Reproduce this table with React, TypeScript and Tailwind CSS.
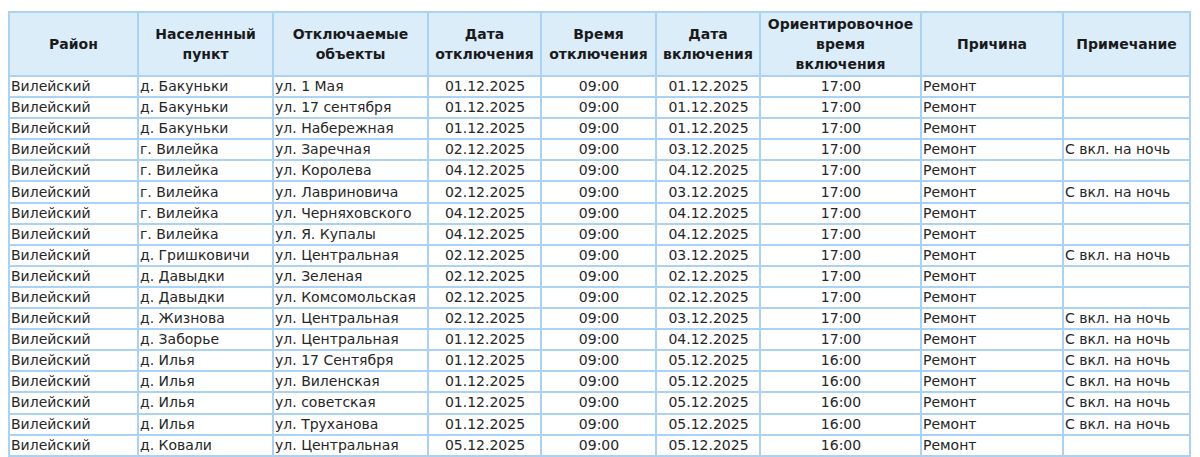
import React from "react";

type Row = [string, string, string, string, string, string, string, string];

const rows: Row[] = [
  ["д. Бакуньки", "ул. 1 Мая", "01.12.2025", "09:00", "01.12.2025", "17:00", "Ремонт", ""],
  ["д. Бакуньки", "ул. 17 сентября", "01.12.2025", "09:00", "01.12.2025", "17:00", "Ремонт", ""],
  ["д. Бакуньки", "ул. Набережная", "01.12.2025", "09:00", "01.12.2025", "17:00", "Ремонт", ""],
  ["г. Вилейка", "ул. Заречная", "02.12.2025", "09:00", "03.12.2025", "17:00", "Ремонт", "С вкл. на ночь"],
  ["г. Вилейка", "ул. Королева", "04.12.2025", "09:00", "04.12.2025", "17:00", "Ремонт", ""],
  ["г. Вилейка", "ул. Лавриновича", "02.12.2025", "09:00", "03.12.2025", "17:00", "Ремонт", "С вкл. на ночь"],
  ["г. Вилейка", "ул. Черняховского", "04.12.2025", "09:00", "04.12.2025", "17:00", "Ремонт", ""],
  ["г. Вилейка", "ул. Я. Купалы", "04.12.2025", "09:00", "04.12.2025", "17:00", "Ремонт", ""],
  ["д. Гришковичи", "ул. Центральная", "02.12.2025", "09:00", "03.12.2025", "17:00", "Ремонт", "С вкл. на ночь"],
  ["д. Давыдки", "ул. Зеленая", "02.12.2025", "09:00", "02.12.2025", "17:00", "Ремонт", ""],
  ["д. Давыдки", "ул. Комсомольская", "02.12.2025", "09:00", "02.12.2025", "17:00", "Ремонт", ""],
  ["д. Жизнова", "ул. Центральная", "02.12.2025", "09:00", "03.12.2025", "17:00", "Ремонт", "С вкл. на ночь"],
  ["д. Заборье", "ул. Центральная", "01.12.2025", "09:00", "04.12.2025", "17:00", "Ремонт", "С вкл. на ночь"],
  ["д. Илья", "ул. 17 Сентября", "01.12.2025", "09:00", "05.12.2025", "16:00", "Ремонт", "С вкл. на ночь"],
  ["д. Илья", "ул. Виленская", "01.12.2025", "09:00", "05.12.2025", "16:00", "Ремонт", "С вкл. на ночь"],
  ["д. Илья", "ул. советская", "01.12.2025", "09:00", "05.12.2025", "16:00", "Ремонт", "С вкл. на ночь"],
  ["д. Илья", "ул. Труханова", "01.12.2025", "09:00", "05.12.2025", "16:00", "Ремонт", "С вкл. на ночь"],
  ["д. Ковали", "ул. Центральная", "05.12.2025", "09:00", "05.12.2025", "16:00", "Ремонт", ""],
];

const headers = [
  ["Район"],
  ["Населенный", "пункт"],
  ["Отключаемые", "объекты"],
  ["Дата", "отключения"],
  ["Время", "отключения"],
  ["Дата", "включения"],
  ["Ориентировочное", "время", "включения"],
  ["Причина"],
  ["Примечание"],
];

const widths = [129, 135, 155, 113, 115, 104, 161, 142, 127];

export default function App() {
  const td =
    "border-2 border-[#a9d2f4] pl-[1px] pr-0 py-0 h-[21.1px] leading-[17px] whitespace-nowrap overflow-hidden";
  return (
    <div
      className="bg-white w-[1200px] h-[457px] overflow-hidden pl-[8px] pt-[11px] text-[#262626]"
      style={{ fontFamily: '"DejaVu Sans", Verdana, sans-serif' }}
    >
      <table className="table-fixed border-collapse text-[14px] w-[1183px]">
        <colgroup>
          {widths.map((w, i) => (
            <col key={i} style={{ width: w }} />
          ))}
        </colgroup>
        <thead>
          <tr className="h-[64px]">
            {headers.map((h, i) => (
              <th
                key={i}
                className="border-2 border-[#a9d2f4] bg-[#dcedfa] font-bold text-center align-middle leading-[20px] text-[14px] p-0 text-[#1a1a1a] whitespace-nowrap"
              >
                {h.map((l, j) => (
                  <div key={j}>{l}</div>
                ))}
              </th>
            ))}
          </tr>
        </thead>
        <tbody>
          {rows.map((r, i) => (
            <tr key={i}>
              <td className={td}>Вилейский</td>
              <td className={td}>{r[0]}</td>
              <td className={td}>{r[1]}</td>
              <td className={td + " text-center"}>{r[2]}</td>
              <td className={td + " text-center"}>{r[3]}</td>
              <td className={td + " text-center"}>{r[4]}</td>
              <td className={td + " text-center"}>{r[5]}</td>
              <td className={td}>{r[6]}</td>
              <td className={td}>{r[7]}</td>
            </tr>
          ))}
        </tbody>
      </table>
    </div>
  );
}
